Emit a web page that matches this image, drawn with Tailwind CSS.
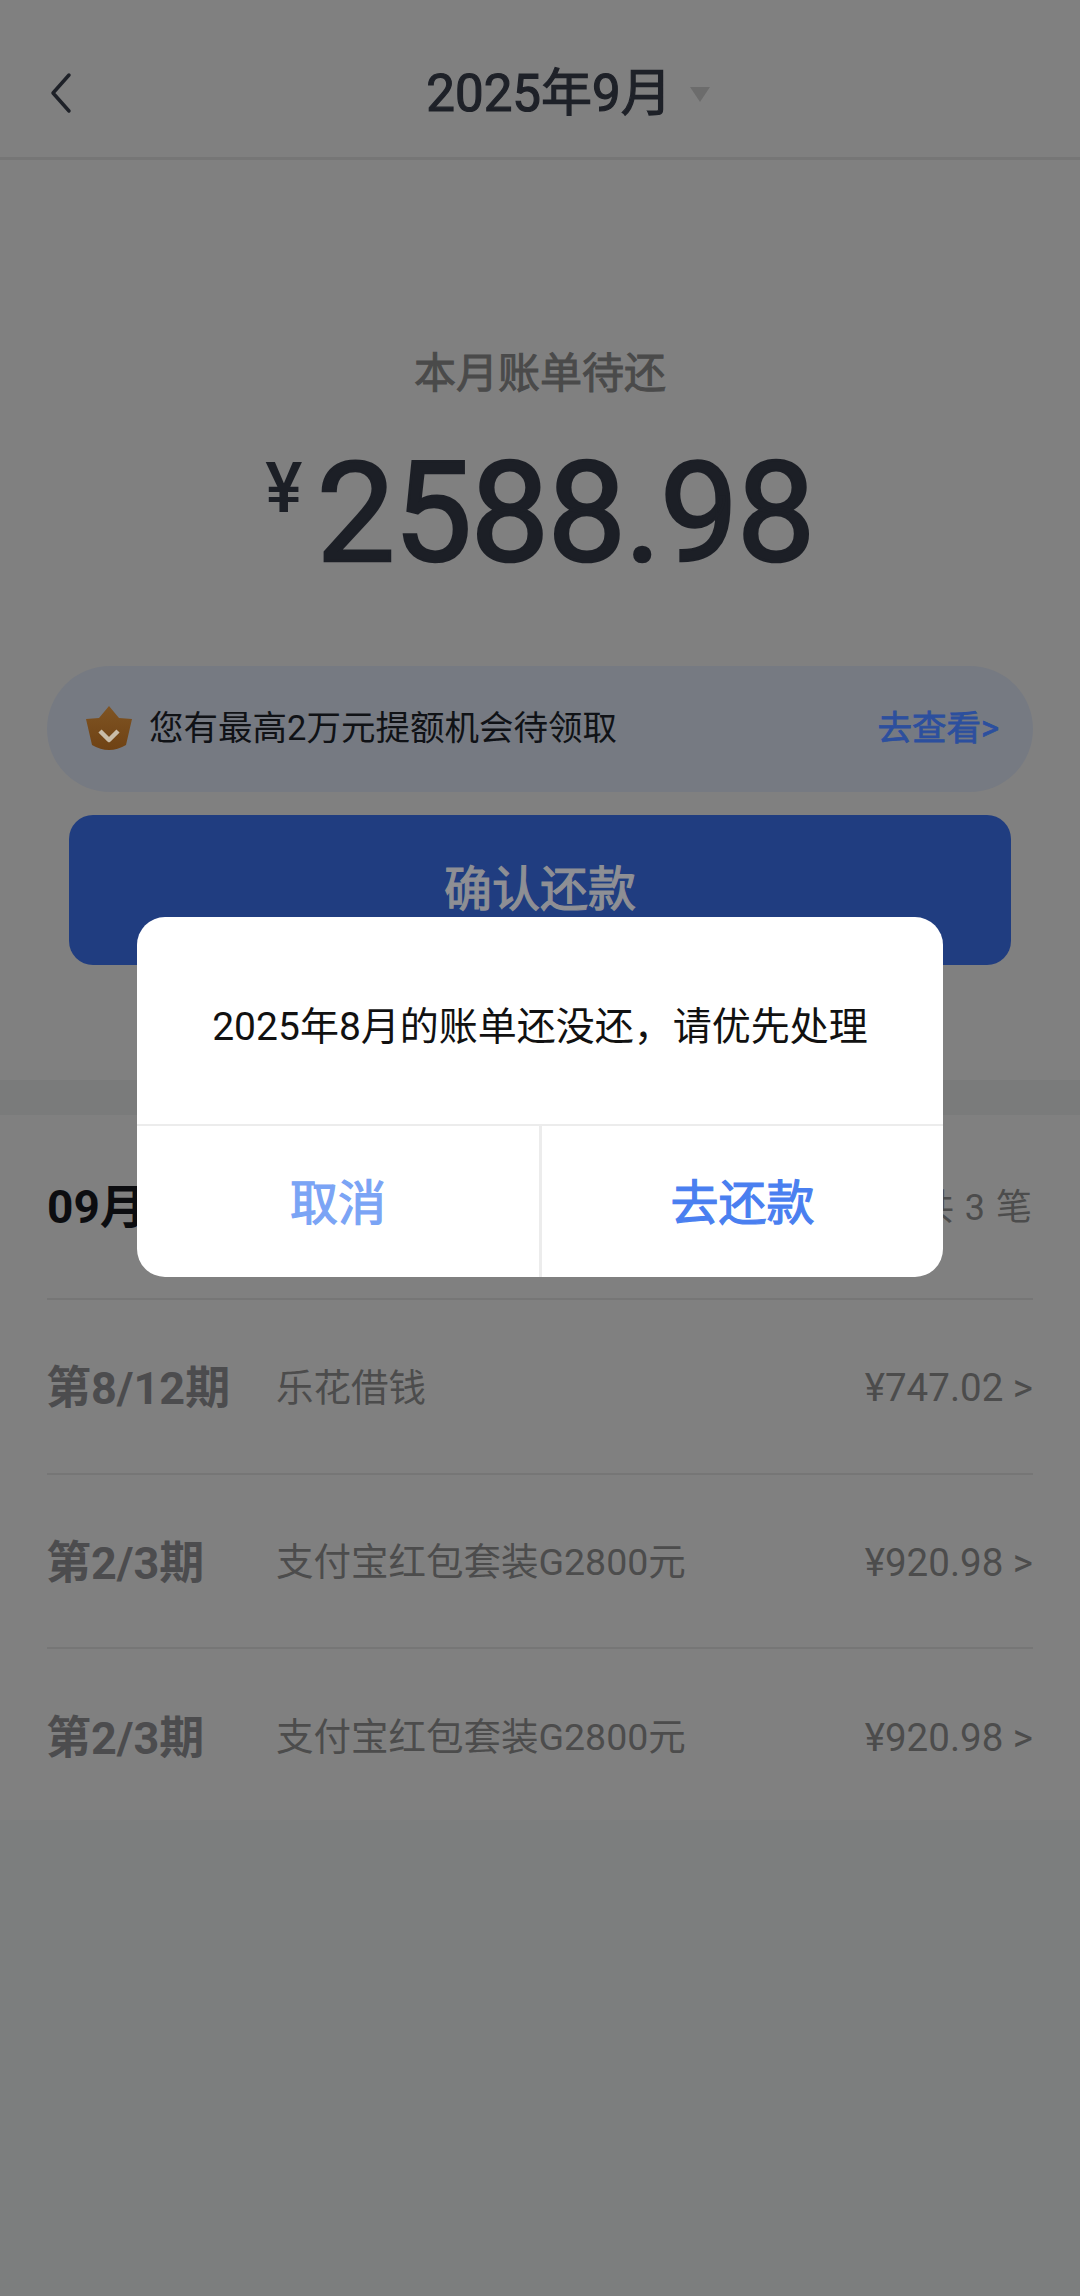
<!DOCTYPE html>
<html lang="en">
<head>
  <meta charset="UTF-8">
  <title>账单</title>
  <meta name="viewport" content="width=device-width, initial-scale=1.0">
  <script src="https://cdn.jsdelivr.net/npm/@tailwindcss/browser@4"></script>
</head>
<body class="w-[1080px] h-[2296px] overflow-hidden bg-[#7c7e7e] font-['Roboto','Noto_Sans_CJK_SC',sans-serif]">
  <div class="relative h-[2296px]">

    <!-- top section -->
    <div class="h-[1080px] bg-[#808080]">
      <header class="relative flex items-center justify-center h-[160px] pl-[56px] pt-[32px] border-b-[3px] border-[#767676]">
        <svg class="absolute left-[48px] top-[72px] w-[26px] h-[42px]" viewBox="0 0 26 42" fill="none" stroke="#1e2128" stroke-width="3.5" stroke-linecap="round" stroke-linejoin="round"><path d="M21 3 L5 21 L21 39"/></svg>
        <span class="text-[51px] text-[#1e2128] [-webkit-text-stroke:1.2px]">2025年9月</span>
        <span class="ml-[18px] w-0 h-0 border-x-[10px] border-x-transparent border-t-[15px] border-t-[#6c6c6c]"></span>
      </header>

      <p class="mt-[189px] text-center text-[42px] leading-[50px] text-[#4a4a4a] [-webkit-text-stroke:1px]">本月账单待还</p>

      <div class="flex justify-center items-start mt-[44px] h-[140px] pr-[1px] text-[#1c1f26]">
        <span class="text-[70px] leading-[90px] font-medium mr-[14px]">¥</span>
        <span class="text-[140px] leading-[140px] tracking-[-1.7px] [-webkit-text-stroke:2.5px]">2588.98</span>
      </div>

      <div class="flex items-center justify-between mx-[47px] mt-[83px] h-[126px] pl-[39px] pr-[34px] rounded-full bg-[#767a82]">
        <div class="flex items-center">
          <svg class="w-[46px] h-[46px]" viewBox="0 0 46 46"><defs><linearGradient id="crown" x1="0" y1="0" x2="0" y2="1"><stop offset="0" stop-color="#7f5423"/><stop offset="1" stop-color="#6f4214"/></linearGradient></defs><path d="M23 0 L33 12 L46 13 L40 39 Q23 49 6 39 L0 13 L13 12 Z" fill="url(#crown)"/><path d="M14 25 L23 34 L32 25" fill="none" stroke="#c9bda9" stroke-width="4.5" stroke-linejoin="round"/></svg>
          <span class="ml-[17px] text-[34.5px] text-[#101216]">您有最高2万元提额机会待领取</span>
        </div>
        <span class="text-[34.5px] text-[#2c4f9e] [-webkit-text-stroke:0.8px]">去查看&gt;</span>
      </div>

      <div class="flex items-center justify-center mx-[69px] mt-[23px] h-[150px] rounded-[24px] bg-[#203d80]">
        <span class="text-[48px] text-[#8e8f94] [-webkit-text-stroke:1.2px]">确认还款</span>
      </div>
    </div>

    <!-- band -->
    <div class="h-[35px] bg-[#7a7b7b]"></div>

    <!-- list -->
    <div class="h-[705px] px-[47px] bg-[#808080]">
      <div class="flex items-center justify-between h-[185px] pt-[2px] border-b-2 border-[#767676]">
        <span class="text-[46px] font-bold text-[#0c0d10]">09月</span>
        <span class="text-[36px] text-[#4c4c4c] tracking-[1px]">共 3 笔</span>
      </div>
      <div class="flex items-center h-[175px] pt-[3px] border-b-2 border-[#767676]">
        <span class="w-[230px] text-[45px] font-bold text-[#4c4c4e] -ml-[1px] pt-[2px]">第8/12期</span>
        <span class="flex-1 text-[37.5px] text-[#4c4c4c]">乐花借钱</span>
        <span class="text-[38.5px] text-[#4c4c4c]">¥747.02 &gt;</span>
      </div>
      <div class="flex items-center h-[174px] pt-[3px] border-b-2 border-[#767676]">
        <span class="w-[230px] text-[45px] font-bold text-[#4c4c4e] -ml-[1px] pt-[2px]">第2/3期</span>
        <span class="flex-1 text-[37.5px] text-[#4c4c4c]">支付宝红包套装G2800元</span>
        <span class="text-[38.5px] text-[#4c4c4c]">¥920.98 &gt;</span>
      </div>
      <div class="flex items-center h-[174px] pt-[3px]">
        <span class="w-[230px] text-[45px] font-bold text-[#4c4c4e] -ml-[1px] pt-[2px]">第2/3期</span>
        <span class="flex-1 text-[37.5px] text-[#4c4c4c]">支付宝红包套装G2800元</span>
        <span class="text-[38.5px] text-[#4c4c4c]">¥920.98 &gt;</span>
      </div>
    </div>

    <!-- dialog -->
    <div class="absolute left-[137px] top-[917px] w-[806px] h-[360px] rounded-[28px] bg-white flex flex-col overflow-hidden">
      <div class="h-[209px] flex items-center justify-center border-b-2 border-[#ececec] text-[39px] text-[#111] pt-[13px]">2025年8月的账单还没还，请优先处理</div>
      <div class="flex flex-1">
        <div class="w-[405px] flex items-center justify-center border-r-[3px] border-[#ececec] text-[48px] text-[#7ba4f5] pt-[4px] [-webkit-text-stroke:1.2px]">取消</div>
        <div class="flex-1 flex items-center justify-center text-[48px] text-[#4a7ff0] pt-[4px] [-webkit-text-stroke:1.2px]">去还款</div>
      </div>
    </div>
  </div>
</body>
</html>
